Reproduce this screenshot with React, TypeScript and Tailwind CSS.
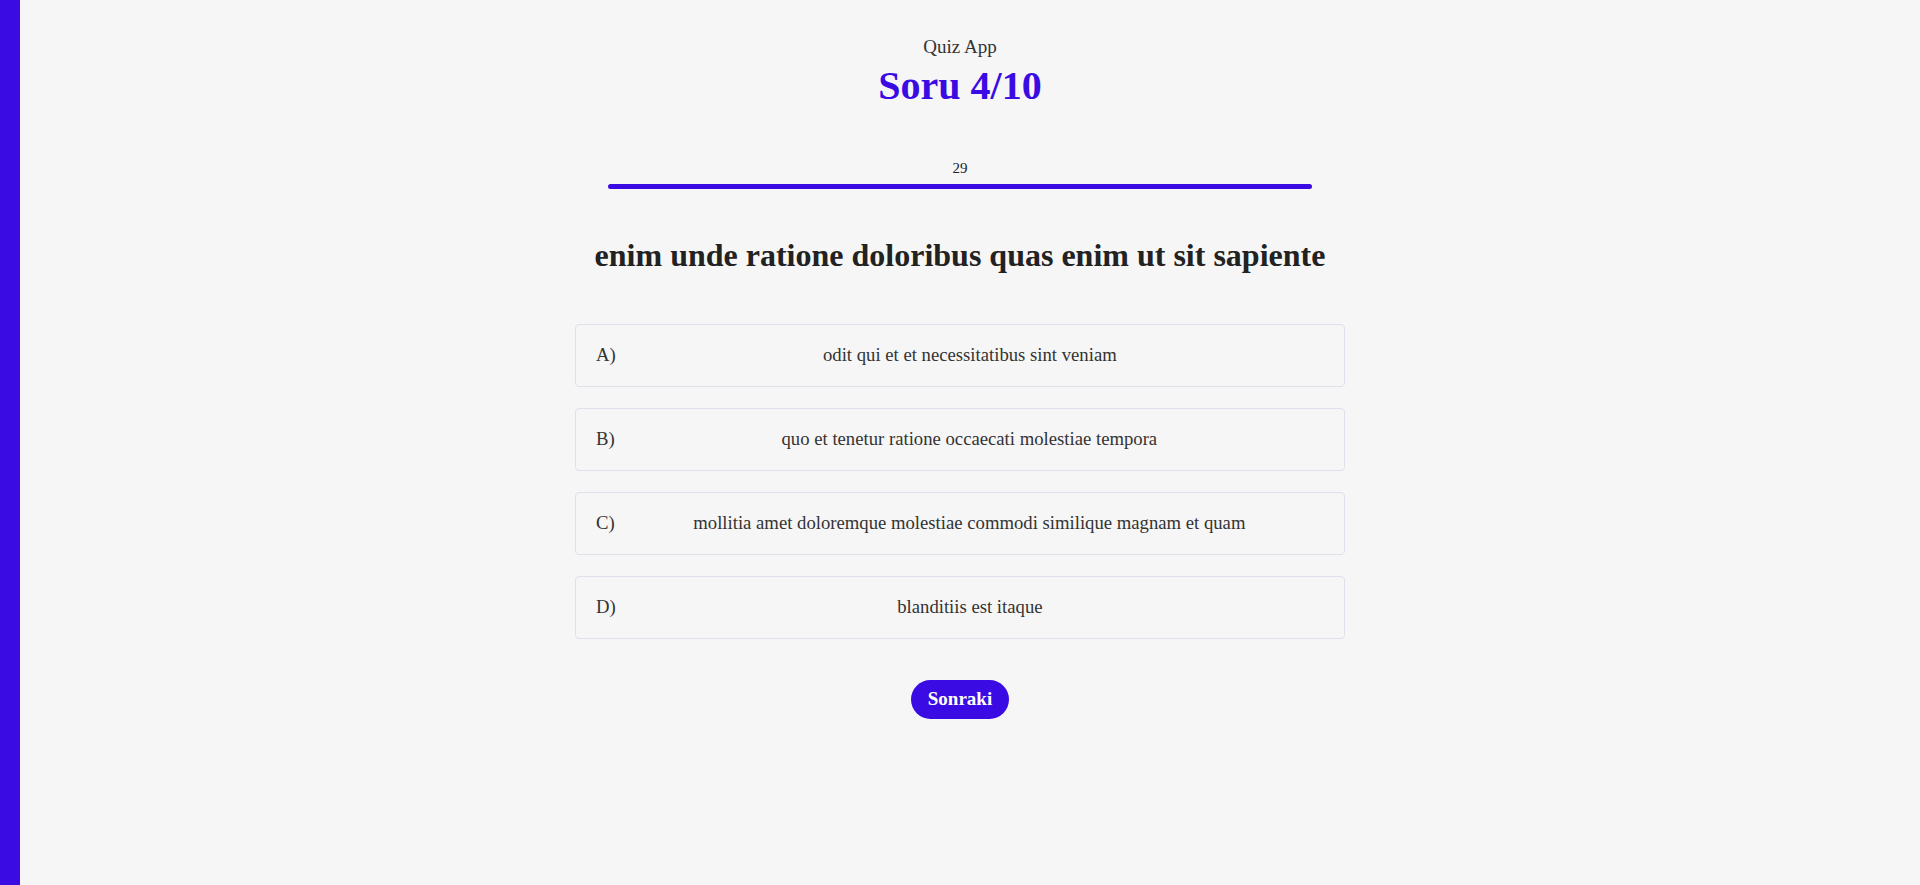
import React, { useState } from 'react';

const question = {
  text: 'enim unde ratione doloribus quas enim ut sit sapiente',
  options: [
    'odit qui et et necessitatibus sint veniam',
    'quo et tenetur ratione occaecati molestiae tempora',
    'mollitia amet doloremque molestiae commodi similique magnam et quam',
    'blanditiis est itaque',
  ],
};

const letters = ['A', 'B', 'C', 'D'];

export default function App() {
  const [selected, setSelected] = useState<number | null>(null);
  const timeLeft = 29;

  return (
    <div
      className="min-h-[885px] bg-[#f6f6f6] text-[#222] border-l-[20px] border-[#3a0ce3]"
      style={{ fontFamily: '"Liberation Serif", "DejaVu Serif", serif' }}
    >
      <div className="flex flex-col items-center -ml-[20px] pt-[36px]">
        <div className="text-[19px] leading-[22px] text-[#333]">Quiz App</div>
        <h1 className="mt-[6px] text-[40px] leading-[44px] font-bold text-[#3a0ce3]">Soru 4/10</h1>

        <div className="mt-[51px] w-[704px] flex flex-col items-center">
          <div className="text-[15px] leading-[18px]">{timeLeft}</div>
          <div className="mt-[7px] h-[5px] w-full rounded-full bg-[#3a0ce3]" />
        </div>

        <h2 className="mt-[48px] text-[32px] leading-[36px] font-bold text-[#222]">{question.text}</h2>

        <div className="mt-[51px] w-[770px] flex flex-col gap-[21px]">
          {question.options.map((opt, i) => (
            <button
              key={i}
              onClick={() => setSelected(i)}
              className={
                'h-[63px] w-full flex items-center px-[20px] rounded-[4px] border text-[18.7px] text-[#333] ' +
                (selected === i ? 'border-[#3a0ce3] bg-white' : 'border-[#e0e0ea] bg-[#f6f6f6]')
              }
            >
              <span>{letters[i]})</span>
              <span className="flex-1 text-center">{opt}</span>
            </button>
          ))}
        </div>

        <button className="mt-[41px] h-[39px] px-[17px] rounded-full bg-[#3a0ce3] text-white font-bold text-[19px]">
          Sonraki
        </button>
      </div>
    </div>
  );
}
